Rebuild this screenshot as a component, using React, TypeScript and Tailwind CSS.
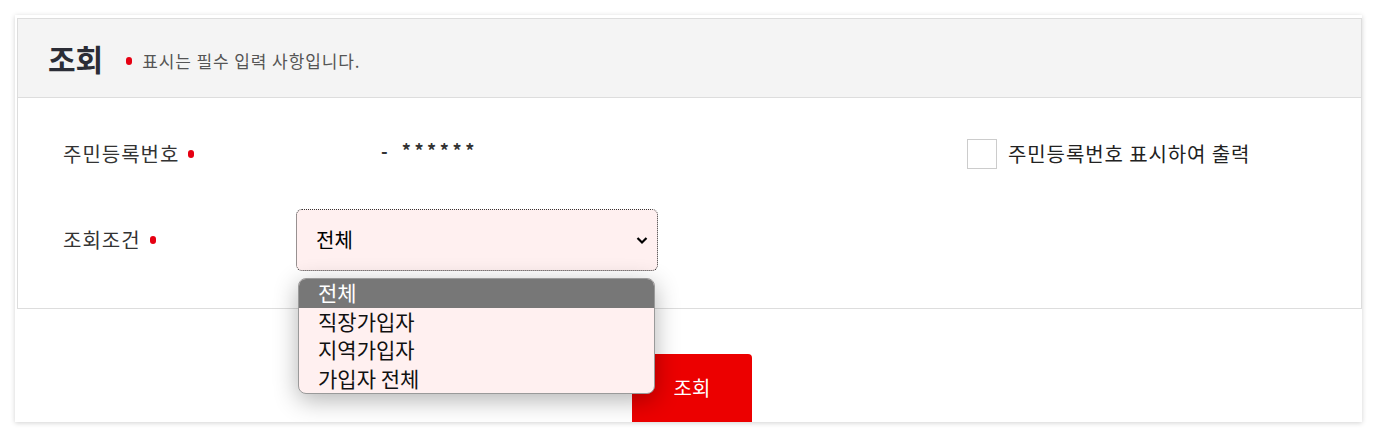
import React from "react";

const font = { fontFamily: '"Noto Sans CJK KR", "Noto Sans", sans-serif' };

const Required = ({ className = "" }: { className?: string }) => (
  <span className={`inline-block w-[6px] h-[8px] rounded-full bg-[#e60012] ${className}`} />
);

const options = ["전체", "직장가입자", "지역가입자", "가입자 전체"];

export default function App() {
  return (
    <div className="w-[1376px] h-[438px] bg-white pt-[15px] pl-[15px]" style={font}>
      <div className="w-[1347px] h-[407px] bg-white shadow-[0_1px_5px_rgba(0,0,0,0.18)] overflow-hidden pt-[3px] pl-[2px]">
        <div className="w-[1345px] border border-[#dddddd]">
          <div className="h-[79px] bg-[#f4f4f4] border-b border-[#dddddd] flex items-center pl-[30px]">
            <h2 className="text-[30px] font-bold text-[#2b2d36] leading-none">조회</h2>
            <Required className="ml-[23px] mt-[6px]" />
            <span className="ml-[10px] mt-[5px] text-[17px] tracking-[0.9px] text-[#555555]">
              표시는 필수 입력 사항입니다.
            </span>
          </div>
          <div className="h-[210px] pl-[45px] pt-[36px]">
            <div className="flex items-center h-[40px]">
              <div className="w-[234px] flex items-center text-[20px] tracking-[1px] text-[#333333]">
                <span>주민등록번호</span>
                <Required className="ml-[9px]" />
              </div>
              <div className="w-[670px] flex items-center -mt-[7px] text-[#333333]">
                <span className="ml-[84px] text-[18px] font-bold">-</span>
                <span className="ml-[14px] text-[18px] font-bold tracking-[3.6px]">******</span>
              </div>
              <label className="flex items-center">
                <span className="w-[30px] h-[30px] border border-[#cccccc] bg-white" />
                <span className="ml-[11px] text-[20px] tracking-[0.9px] text-[#222222]">
                  주민등록번호 표시하여 출력
                </span>
              </label>
            </div>
            <div className="flex items-center mt-[35px]">
              <div className="w-[233px] flex items-center text-[20px] tracking-[1px] text-[#333333]">
                <span>조회조건</span>
                <Required className="ml-[9px]" />
              </div>
              <div className="relative">
                <div className="w-[362px] h-[62px] rounded-[6px] border border-dotted border-[#333333] bg-[#fff0f0] flex items-center justify-between pl-[19px] pr-[8px]">
                  <span className="text-[20px] text-black">전체</span>
                  <svg width="14" height="14" viewBox="0 0 14 14" fill="none">
                    <path d="M2.5 5 L7 9.5 L11.5 5" stroke="#000" strokeWidth="2.2" />
                  </svg>
                </div>
                <ul className="absolute left-[2px] top-[69px] w-[357px] rounded-[8px] border border-[#9a9a9a] bg-[#fff0f0] overflow-hidden shadow-[0_6px_24px_rgba(0,0,0,0.3)] z-10">
                  {options.map((o, i) => (
                    <li
                      key={o}
                      className={`h-[28.5px] leading-[27px] pl-[19px] text-[21px] ${
                        i === 0 ? "bg-[#777777] text-white" : "text-[#111111]"
                      }`}
                    >
                      {o}
                    </li>
                  ))}
                </ul>
              </div>
            </div>
          </div>
        </div>
        <div className="flex justify-center pl-[5px] pt-[45px]">
          <button className="w-[120px] h-[80px] rounded-t-[4px] bg-[#ec0000] text-white text-[20px] pb-[12px]">
            조회
          </button>
        </div>
      </div>
    </div>
  );
}
